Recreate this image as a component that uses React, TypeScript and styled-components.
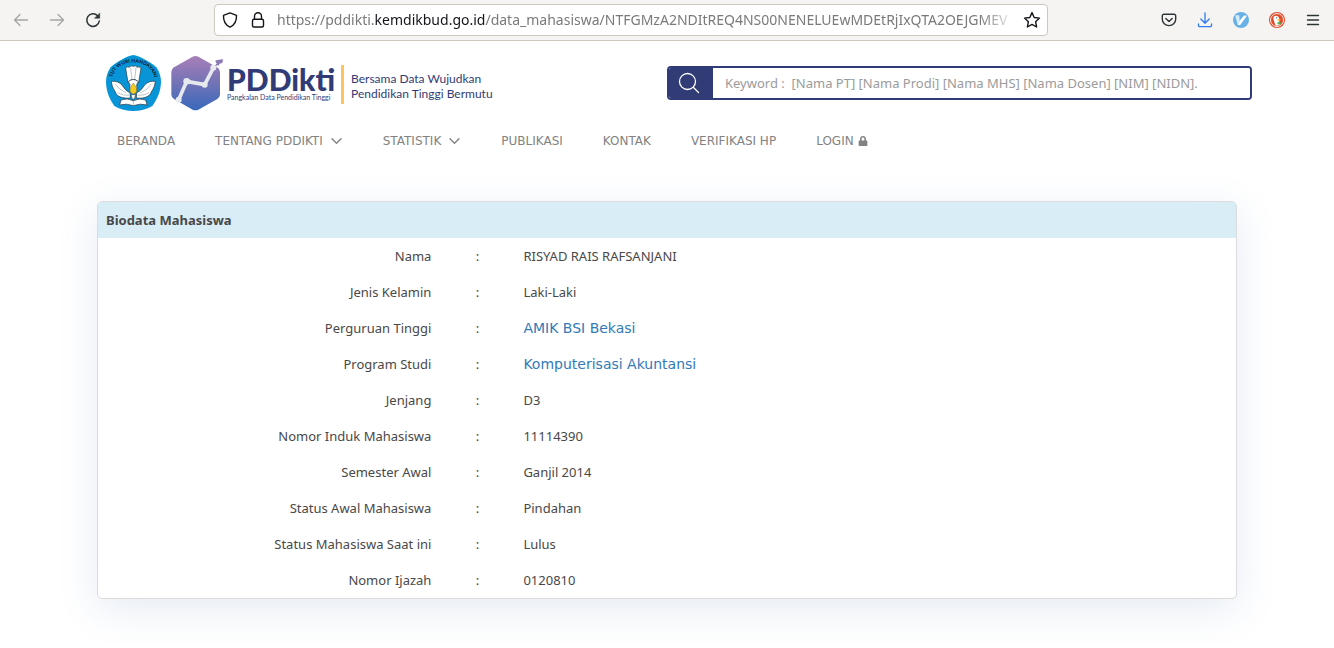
import React from 'react';
import styled, { createGlobalStyle } from 'styled-components';
import { FaLock } from 'react-icons/fa';

const GlobalStyle = createGlobalStyle`
  *, *::before, *::after { box-sizing: border-box; }
  body {
    margin: 0;
    background: #fff;
    color: #484848;
    font-family: "Noto Sans", sans-serif;
    font-size: 13px;
    line-height: 20px;
  }
  button { font: inherit; border: 0; padding: 0; background: none; cursor: pointer; }
  a { text-decoration: none; }
  svg { display: block; flex: none; }
`;

const Toolbar = styled.div`
  display: flex;
  align-items: center;
  height: 41px;
  padding: 0 11px;
  background: #f5f4f2;
  border-bottom: 1px solid #cdc7c0;
`;

const ToolGroup = styled.div`
  display: flex;
  flex: none;
  gap: 16px;
`;

const ToolButton = styled.button<{ $dim?: boolean }>`
  display: flex;
  align-items: center;
  justify-content: center;
  width: 20px;
  height: 24px;
  color: ${p => (p.$dim ? '#a3a6a4' : '#2e3436')};
`;

const AddressBar = styled.div`
  display: flex;
  align-items: center;
  flex: 1;
  min-width: 0;
  height: 32px;
  margin: 0 111px;
  padding: 0 6px;
  background: #fff;
  border: 1px solid #cdc7c0;
  border-radius: 4px;
`;

const AddressIcon = styled.button`
  display: flex;
  flex: none;
  align-items: center;
  justify-content: center;
  width: 18px;
  height: 24px;
  margin-right: 10px;
  color: #15141a;

  &:last-child { margin: 0 0 0 6px; }
`;

const Url = styled.div`
  flex: 1;
  min-width: 0;
  overflow: hidden;
  white-space: nowrap;
  font-size: 14px;
  color: #7a7a7a;
  mask-image: linear-gradient(to left, transparent, #000 36px);

  b { font-weight: 400; color: #15141a; }
`;

const Header = styled.header`
  display: flex;
  align-items: center;
  justify-content: space-between;
  max-width: 1170px;
  margin: 0 auto;
  padding: 14px 0 14px 24px;
`;

const Brand = styled.a`
  display: flex;
  flex: none;
  align-items: center;
  color: #313c76;
  font-family: Lato, sans-serif;
`;

const Wordmark = styled.span`
  display: flex;
  flex-direction: column;
  margin: 2px 0 0 4px;
  padding: 0 6px 3px 0;
  border-right: 3px solid #fdc35c;
`;

const BrandName = styled.span`
  font-size: 30px;
  font-weight: 900;
  line-height: 28px;
`;

const BrandSub = styled.span`
  font-size: 7px;
  line-height: 8px;
`;

const Tagline = styled.span`
  margin: 6px 0 0 7px;
  font-size: 12px;
  line-height: 15px;
  white-space: nowrap;
`;

const Search = styled.form`
  display: flex;
  flex: 0 1 585px;
  min-width: 0;
  height: 34px;
  overflow: hidden;
  border: 2px solid #313c76;
  border-radius: 4px;
`;

const SearchButton = styled.button`
  display: flex;
  flex: none;
  align-items: center;
  justify-content: center;
  width: 44px;
  padding-right: 4px;
  color: #fff;
  background: #313c76;
`;

const SearchInput = styled.input`
  flex: 1;
  min-width: 0;
  padding: 0 12px;
  border: 0;
  outline: 0;
  font-family: "Noto Sans", sans-serif;
  font-size: 13px;

  &::placeholder { color: #9b9b9b; opacity: 1; }
`;

const Nav = styled.nav`
  display: flex;
  max-width: 1140px;
  margin: 0 auto;
  padding: 6px 0;
`;

const NavLink = styled.a<{ $gap?: number }>`
  display: flex;
  align-items: center;
  gap: ${p => p.$gap ?? 0}px;
  padding: 0 20px;
  color: #828282;
  font-family: "DejaVu Sans", sans-serif;
  font-size: 12px;
`;

const Card = styled.main`
  max-width: 1140px;
  margin: 44px auto;
  overflow: hidden;
  background: #fff;
  border: 1px solid #dcdcdc;
  border-radius: 5px;
  box-shadow: 0 10px 40px rgba(51, 102, 170, 0.13);
`;

const Table = styled.table`
  width: 100%;
  border-collapse: collapse;
  table-layout: fixed;
`;

const Title = styled.th`
  height: 36px;
  padding: 0 8px;
  background: #d9edf7;
  text-align: left;
  font-weight: 700;
`;

const Label = styled.th`
  height: 36px;
  padding: 0 8px;
  font-weight: 400;
  text-align: right;
`;

const Colon = styled.td`
  padding: 0 8px;
  text-align: center;
`;

const Value = styled.td`
  padding: 0 8px;
`;

const ValueLink = styled.a`
  color: #337ab7;
  font-family: "DejaVu Sans", sans-serif;
  font-size: 14px;
`;

const LabelCol = styled.col`width: 30%;`;
const ColonCol = styled.col`width: 76px;`;

const stroke = {
  fill: 'none',
  stroke: 'currentColor',
  strokeLinecap: 'round' as const,
  strokeLinejoin: 'round' as const,
};

const Arrow = ({ flip }: { flip?: boolean }) => (
  <svg width="16" height="16" viewBox="0 0 16 16" {...stroke} strokeWidth="1.3">
    <path d={flip ? 'M1.5 8h13M9 2.5 14.5 8 9 13.5' : 'M14.5 8h-13M7 2.5 1.5 8 7 13.5'} />
  </svg>
);

const Reload = () => (
  <svg width="16" height="16" viewBox="0 0 16 16" {...stroke} strokeWidth="1.5">
    <path d="M14.3 9A6.3 6.3 0 1 1 12.6 3.7" />
    <path d="M14.7 1.3v5h-5z" fill="currentColor" strokeWidth="0.5" />
  </svg>
);

const Shield = () => (
  <svg width="16" height="16" viewBox="0 0 16 16" {...stroke} strokeWidth="1.4">
    <path d="M8 .9 1.5 3.3C1.2 9.2 3.6 13.2 8 15.2c4.4-2 6.8-6 6.5-11.9z" />
  </svg>
);

const Padlock = () => (
  <svg width="16" height="16" viewBox="0 0 16 16" {...stroke} strokeWidth="1.4">
    <rect x="2.5" y="7.3" width="11" height="7.7" rx="1.5" />
    <path d="M4.5 7.3V4.2a3.5 3.5 0 0 1 7 0v3.1" />
  </svg>
);

const Star = () => (
  <svg width="18" height="18" viewBox="0 0 18 18" {...stroke} strokeWidth="1.4">
    <path d="m9 1.6 2.2 4.9 5.3.6-3.9 3.6 1 5.3L9 13.4 4.4 16l1-5.3L1.5 7.1l5.3-.6z" />
  </svg>
);

const Pocket = () => (
  <svg width="16" height="16" viewBox="0 0 16 16" {...stroke} strokeWidth="1.4">
    <path d="M2.8 2.2h10.4a1.5 1.5 0 0 1 1.5 1.5v3.6a6.7 6.3 0 0 1-13.4 0V3.7a1.5 1.5 0 0 1 1.5-1.5zM4.8 6.5 8 9.6l3.2-3.1" />
  </svg>
);

const Download = () => (
  <svg width="16" height="16" viewBox="0 0 16 16" fill="none" stroke="#2f7bf0" strokeWidth="1.3" strokeLinecap="round" strokeLinejoin="round">
    <path d="M8 .8v10.4M3.8 7 8 11.2 12.2 7M1.5 12v1.5a1.2 1.2 0 0 0 1.2 1.2h10.6a1.2 1.2 0 0 0 1.2-1.2V12" />
  </svg>
);

const Vimium = () => (
  <svg width="16" height="16" viewBox="0 0 16 16">
    <circle cx="8" cy="8" r="8" fill="#68b1e5" />
    <path d="M6 9.5 11 3.5l3 .3L7.2 13H4.8z" fill="#fff" />
    <path d="M2.2 3.2h4l.6 7.3-2 2.5z" fill="#d7ebf8" />
  </svg>
);

const Duck = () => (
  <svg width="16" height="16" viewBox="0 0 16 16">
    <circle cx="8" cy="8" r="8" fill="#e2492b" />
    <circle cx="8" cy="8" r="6.5" fill="none" stroke="#fff" strokeWidth="0.9" />
    <path d="M4.6 4.8c1.3-1.8 4.8-1.5 5.4 1 .3 1.300 0 2.600.4 4.200l.4 3-4.200.8C6 10.700 3.700 7.500 4.600 4.800z" fill="#fff" />
    <path d="M8.3 7.400c1.200-.5 2.400-.5 3.600-.1-.4.9-1.900 1.500-3.500 1.300z" fill="#fbc02d" />
    <path d="m8.400 10.200 3.200-.2v2.500l-2.900-.2z" fill="#4cae50" />
    <circle cx="7.700" cy="5.800" r=".6" fill="#333" />
  </svg>
);

const Menu = () => (
  <svg width="16" height="16" viewBox="0 0 16 16" {...stroke} strokeWidth="1.4">
    <path d="M2.5 3.5h11M2.5 8h11M2.5 12.5h11" />
  </svg>
);

const Magnifier = () => (
  <svg width="22" height="22" viewBox="0 0 22 22" {...stroke} strokeWidth="1.3">
    <circle cx="9.5" cy="9.5" r="8" />
    <path d="m15.5 15.5 5 5" />
  </svg>
);

const Chevron = () => (
  <svg width="12" height="8" viewBox="0 0 12 8" {...stroke} strokeWidth="1.4">
    <path d="m1 1.7 4.500 4.600L10 1.700" />
  </svg>
);

const Emblem = () => (
  <svg width="55" height="56" viewBox="33 29 165 168">
    <path d="M115 29C130 31 165 48 184 66C194 80 198 95 198 110C197 140 187 160 172 182C155 192 135 197 115 197C95 197 75 192 58 182C43 160 34 140 33 110C33 95 37 80 47 66C65 48 100 31 115 29Z" fill="#0795d8" />
    <path id="motto" d="M51 112C48 31 182 31 179 112" fill="none" />
    <text fontFamily="Lato, sans-serif" fontSize="15" fontWeight="900" fill="#14222c">
      <textPath href="#motto" startOffset="50%" textAnchor="middle">TUT WURI HANDAYANI</textPath>
    </text>
    <g fill="#fff" stroke="#26323a" strokeWidth="2" strokeLinejoin="round">
      <path d="M49 108C62 106 74 111 81 119C87 127 92 137 105 142L106 158C88 160 71 156 64 146L60 138C54 130 50 119 49 108Z" />
      <path d="M181 108C168 106 156 111 149 119C143 127 138 137 125 142L124 158C142 160 159 156 166 146L170 138C176 130 180 119 181 108Z" />
      <path d="M92 68Q98 62 103 66Q108 59 115 63Q122 59 127 66Q132 62 138 68L131 112Q125 102 115 102Q105 102 99 112Z" />
      <path d="M78 164Q97 157 115 166Q133 157 152 164L156 179Q135 173 115 181Q95 173 74 179Z" />
      <path d="M100 109Q115 96 130 109L125 118Q128 137 115 147Q102 137 105 118Z" />
    </g>
    <path d="M61 116Q70 132 94 143M169 116Q160 132 136 143M107 68l4 34M123 68l-4 34M115 166v13M68 142q14 9 34 8M162 142q-14 9-34 8" fill="none" stroke="#7d8a91" strokeWidth="1.5" />
    <path d="M115 113C129 131 127 144 115 146C103 144 101 131 115 113Z" fill="#f5cb1d" stroke="#8a701f" strokeWidth="1.5" />
    <path d="M108 148h14l-4 13h-6z" fill="#fff" stroke="#26323a" strokeWidth="1.5" />
  </svg>
);

const Hexagon = () => (
  <svg width="52" height="56" viewBox="227 29 156 168">
    <defs>
      <linearGradient id="hex" x1="0" y1="0" x2="0" y2="1">
        <stop offset="0" stopColor="#a87fb7" />
        <stop offset="0.5" stopColor="#7273b6" />
        <stop offset="1" stopColor="#3869bc" />
      </linearGradient>
    </defs>
    <path d="M292 34Q300 30 309 34L366 66Q374 71 374 80V147Q374 156 366 161L309 193Q300 197 292 193L236 161Q228 156 228 147V80Q228 71 236 66Z" fill="url(#hex)" />
    <path d="M342 52 380 74V44L362 36Z" fill="#fff" />
    <path d="M358 64 371 51M362 47l19-3-2 8-8 1-2 6z" fill="#8b78b6" stroke="#8b78b6" strokeWidth="4" strokeLinejoin="round" />
    <path d="M250 163 274 108 328 118 354 68" fill="none" stroke="#e6e9ee" strokeWidth="11" />
    <g fill="#e6e9ee">
      <circle cx="250" cy="163" r="9" />
      <circle cx="274" cy="108" r="10" />
      <circle cx="328" cy="118" r="9" />
      <circle cx="354" cy="67" r="9" />
    </g>
  </svg>
);

const HexWrap = styled.span`
  margin-left: 10px;
`;

const navItems: { text: string; icon?: 'menu' | 'lock' }[] = [
  { text: 'BERANDA' },
  { text: 'TENTANG PDDIKTI', icon: 'menu' },
  { text: 'STATISTIK', icon: 'menu' },
  { text: 'PUBLIKASI' },
  { text: 'KONTAK' },
  { text: 'VERIFIKASI HP' },
  { text: 'LOGIN', icon: 'lock' },
];

const rows: { label: string; value: string; link?: boolean }[] = [
  { label: 'Nama', value: 'RISYAD RAIS RAFSANJANI' },
  { label: 'Jenis Kelamin', value: 'Laki-Laki' },
  { label: 'Perguruan Tinggi', value: 'AMIK BSI Bekasi', link: true },
  { label: 'Program Studi', value: 'Komputerisasi Akuntansi', link: true },
  { label: 'Jenjang', value: 'D3' },
  { label: 'Nomor Induk Mahasiswa', value: '11114390' },
  { label: 'Semester Awal', value: 'Ganjil 2014' },
  { label: 'Status Awal Mahasiswa', value: 'Pindahan' },
  { label: 'Status Mahasiswa Saat ini', value: 'Lulus' },
  { label: 'Nomor Ijazah', value: '0120810' },
];

export default function App() {
  return (
    <>
      <GlobalStyle />
      <Toolbar>
        <ToolGroup>
          <ToolButton $dim aria-label="Back"><Arrow /></ToolButton>
          <ToolButton $dim aria-label="Forward"><Arrow flip /></ToolButton>
          <ToolButton aria-label="Reload"><Reload /></ToolButton>
        </ToolGroup>
        <AddressBar>
          <AddressIcon aria-label="Tracking protection"><Shield /></AddressIcon>
          <AddressIcon aria-label="Site information"><Padlock /></AddressIcon>
          <Url>https://pddikti.<b>kemdikbud.go.id</b>/data_mahasiswa/NTFGMzA2NDItREQ4NS00NENELUEwMDEtRjIxQTA2OEJGMEV</Url>
          <AddressIcon aria-label="Bookmark"><Star /></AddressIcon>
        </AddressBar>
        <ToolGroup>
          <ToolButton aria-label="Save to Pocket"><Pocket /></ToolButton>
          <ToolButton aria-label="Downloads"><Download /></ToolButton>
          <ToolButton aria-label="Vimium"><Vimium /></ToolButton>
          <ToolButton aria-label="Privacy"><Duck /></ToolButton>
          <ToolButton aria-label="Menu"><Menu /></ToolButton>
        </ToolGroup>
      </Toolbar>
      <Header>
        <Brand href="#">
          <Emblem />
          <HexWrap><Hexagon /></HexWrap>
          <Wordmark>
            <BrandName>PDDikti</BrandName>
            <BrandSub>Pangkalan Data Pendidikan Tinggi</BrandSub>
          </Wordmark>
          <Tagline>Bersama Data Wujudkan<br />Pendidikan Tinggi Bermutu</Tagline>
        </Brand>
        <Search>
          <SearchButton type="button" aria-label="Cari"><Magnifier /></SearchButton>
          <SearchInput
            aria-label="Keyword"
            placeholder="Keyword :  [Nama PT] [Nama Prodi] [Nama MHS] [Nama Dosen] [NIM] [NIDN]."
          />
        </Search>
      </Header>
      <Nav>
        {navItems.map(item => (
          <NavLink key={item.text} href="#" $gap={item.icon === 'lock' ? 4 : 8}>
            {item.text}
            {item.icon === 'menu' && <Chevron />}
            {item.icon === 'lock' && <FaLock size={10} />}
          </NavLink>
        ))}
      </Nav>
      <Card>
        <Table>
          <colgroup><LabelCol /><ColonCol /><col /></colgroup>
          <thead>
            <tr><Title colSpan={3}>Biodata Mahasiswa</Title></tr>
          </thead>
          <tbody>
            {rows.map(row => (
              <tr key={row.label}>
                <Label scope="row">{row.label}</Label>
                <Colon>:</Colon>
                <Value>{row.link ? <ValueLink href="#">{row.value}</ValueLink> : row.value}</Value>
              </tr>
            ))}
          </tbody>
        </Table>
      </Card>
    </>
  );
}
